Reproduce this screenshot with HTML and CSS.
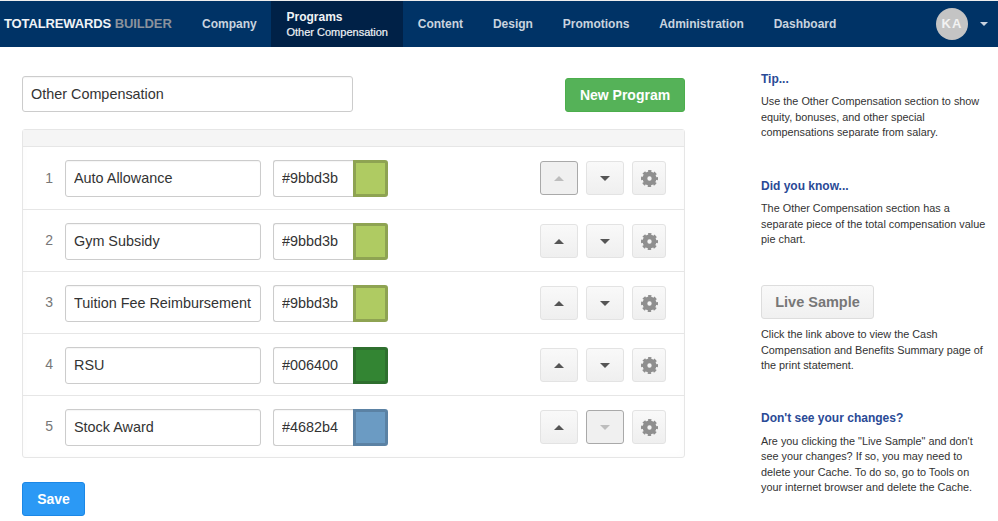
FILE: index.html
```html
<!DOCTYPE html>
<html lang="en">
<head>
<meta charset="utf-8">
<title>Other Compensation</title>
<link rel="stylesheet" href="styles.css">
</head>
<body>
<svg class="defs" aria-hidden="true">
  <symbol id="cog" viewBox="0 0 18 18">
    <circle class="cog-body" cx="9" cy="9" r="4.8"/>
    <circle class="cog-teeth" cx="9" cy="9" r="7.2"/>
  </symbol>
</svg>
<header class="nav">
  <div class="brand"><b>TOTALREWARDS</b> <span>BUILDER</span></div>
  <nav class="menu">
    <a class="item">Company</a>
    <a class="item active"><b>Programs</b><small>Other Compensation</small></a>
    <a class="item">Content</a>
    <a class="item">Design</a>
    <a class="item">Promotions</a>
    <a class="item">Administration</a>
    <a class="item">Dashboard</a>
  </nav>
  <div class="user"><span class="avatar">KA</span><i class="caret"></i></div>
</header>
<div class="page">
  <main class="content">
    <div class="top">
      <input class="field title" value="Other Compensation">
      <button class="btn-green">New Program</button>
    </div>
    <section class="panel">
      <div class="panel-head"></div>
      <div class="row first">
        <span class="num">1</span>
        <input class="field name" value="Auto Allowance">
        <div class="color"><input class="field hex" value="#9bbd3b"><span class="swatch lime"></span></div>
        <div class="actions">
          <button class="tool off"><i class="up"></i></button>
          <button class="tool"><i class="down"></i></button>
          <button class="tool gear"><svg><use href="#cog"/></svg></button>
        </div>
      </div>
      <div class="row">
        <span class="num">2</span>
        <input class="field name" value="Gym Subsidy">
        <div class="color"><input class="field hex" value="#9bbd3b"><span class="swatch lime"></span></div>
        <div class="actions">
          <button class="tool"><i class="up"></i></button>
          <button class="tool"><i class="down"></i></button>
          <button class="tool gear"><svg><use href="#cog"/></svg></button>
        </div>
      </div>
      <div class="row">
        <span class="num">3</span>
        <input class="field name" value="Tuition Fee Reimbursement">
        <div class="color"><input class="field hex" value="#9bbd3b"><span class="swatch lime"></span></div>
        <div class="actions">
          <button class="tool"><i class="up"></i></button>
          <button class="tool"><i class="down"></i></button>
          <button class="tool gear"><svg><use href="#cog"/></svg></button>
        </div>
      </div>
      <div class="row">
        <span class="num">4</span>
        <input class="field name" value="RSU">
        <div class="color"><input class="field hex" value="#006400"><span class="swatch green"></span></div>
        <div class="actions">
          <button class="tool"><i class="up"></i></button>
          <button class="tool"><i class="down"></i></button>
          <button class="tool gear"><svg><use href="#cog"/></svg></button>
        </div>
      </div>
      <div class="row">
        <span class="num">5</span>
        <input class="field name" value="Stock Award">
        <div class="color"><input class="field hex" value="#4682b4"><span class="swatch blue"></span></div>
        <div class="actions">
          <button class="tool"><i class="up"></i></button>
          <button class="tool off"><i class="down"></i></button>
          <button class="tool gear"><svg><use href="#cog"/></svg></button>
        </div>
      </div>
    </section>
    <button class="btn-blue">Save</button>
  </main>
  <aside class="side">
    <h4>Tip...</h4>
    <p>Use the Other Compensation section to show equity, bonuses, and other special compensations separate from salary.</p>
    <h4>Did you know...</h4>
    <p>The Other Compensation section has a separate piece of the total compensation value pie chart.</p>
    <button class="btn-live">Live Sample</button>
    <p class="after-live">Click the link above to view the Cash Compensation and Benefits Summary page of the print statement.</p>
    <h4>Don't see your changes?</h4>
    <p class="last">Are you clicking the "Live Sample" and don't see your changes? If so, you may need to delete your Cache. To do so, go to Tools on your internet browser and delete the Cache.</p>
  </aside>
</div>
</body>
</html>
```
FILE: styles.css
```css
* { box-sizing: border-box; }
html, body { margin: 0; padding: 0; }
body {
  font-family: "Liberation Sans", Arial, sans-serif;
  color: #333;
  background: #fff;
  height: 521px;
  overflow: hidden;
  border-top: 1px solid #eee;
}
.defs { display: none; }
.nav {
  display: flex;
  align-items: stretch;
  height: 46px;
  background: #003366;
  color: #c9d3df;
}
.brand {
  width: 202px;
  padding-left: 4px;
  line-height: 46px;
  font-size: 13px;
  font-weight: bold;
  white-space: nowrap;
}
.brand b { color: #f0f3f6; letter-spacing: -0.13px; }
.brand span { color: #8a929c; letter-spacing: -0.1px; }
.menu { display: flex; flex: 1; gap: 29.8px; }
.item {
  display: flex;
  flex-direction: column;
  justify-content: center;
  font-size: 12px;
  font-weight: bold;
  white-space: nowrap;
}
.item.active {
  padding: 0 15px 2px;
  margin: 0 -15px;
  background: #002147;
  color: #f0f3f6;
}
.item.active b { line-height: 18px; }
.item.active small { font-size: 11px; font-weight: normal; line-height: 13px; -webkit-text-stroke: 0.2px; }
.user { display: flex; align-items: center; padding-right: 10px; }
.avatar {
  width: 32px;
  height: 32px;
  border-radius: 50%;
  background: #c4c4c4;
  color: #f2f2f2;
  font-size: 13px;
  font-weight: bold;
  letter-spacing: 1px;
  text-align: center;
  line-height: 32px;
}
.caret {
  margin-left: 12px;
  border-top: 4px solid #c9d3df;
  border-left: 4px solid transparent;
  border-right: 4px solid transparent;
}
.page { display: flex; }
.content { width: 663px; margin: 29px 0 0 22px; }
.top { display: flex; justify-content: space-between; align-items: flex-start; }
.field {
  height: 37px;
  border: 1px solid #ccc;
  border-radius: 3px;
  padding: 0 8px;
  font: 14.4px "Liberation Sans", Arial, sans-serif;
  color: #333;
  background: #fff;
  box-shadow: inset 0 1px 1px rgba(0,0,0,.04);
}
.name, .hex { padding-bottom: 2px; }
.title { width: 331px; height: 36px; }
.btn-green {
  width: 120px;
  height: 34px;
  margin-top: 2px;
  border: 1px solid #4cae4c;
  border-radius: 3px;
  background: #55b258;
  color: #fff;
  font: bold 14px "Liberation Sans", Arial, sans-serif;
}
.panel {
  margin-top: 17px;
  border: 1px solid #e6e6e6;
  border-radius: 3px;
  box-shadow: inset 0 0 8px rgba(0,0,0,.02);
}
.panel-head { height: 16px; background: #f5f5f5; }
.row {
  display: flex;
  align-items: flex-start;
  height: 62px;
  padding: 13px 18px 0 0;
  border-top: 1px solid #e6e6e6;
}
.row.first { height: 63px; }
.num { width: 42px; padding-right: 12px; text-align: right; font-size: 14px; line-height: 35px; color: #777; }
.first .num { line-height: 37px; }
.name { width: 196px; }
.color { display: flex; margin-left: 12px; }
.hex { width: 80px; border-radius: 3px 0 0 3px; border-right: 0; }
.swatch { width: 35px; height: 37px; border: 3px solid; border-radius: 0 3px 3px 0; }
.lime { background: #afcb62; border-color: #8ea352; }
.green { background: #338533; border-color: #2e6f2e; }
.blue { background: #6b9bc3; border-color: #5b82a4; }
.actions { display: flex; gap: 8px; margin: 1px 0 0 auto; }
.tool {
  display: flex;
  align-items: center;
  justify-content: center;
  width: 38px;
  height: 34px;
  padding: 0;
  border: 1px solid #e3e3e3;
  border-radius: 3px;
  background: linear-gradient(#f9f9f9, #efefef);
}
.tool.off { border-color: #a9a9a9; background: #f0f0f0; }
.gear { width: 34px; }
.gear svg { width: 17px; height: 17px; }
.cog-body { fill: none; stroke: #8f8f8f; stroke-width: 5; }
.cog-teeth { fill: none; stroke: #8f8f8f; stroke-width: 3.6; stroke-dasharray: 3.2 2.455; stroke-dashoffset: 1.6; }
.up, .down { border-left: 5px solid transparent; border-right: 5px solid transparent; }
.up { border-bottom: 5px solid #555; }
.down { border-top: 5px solid #555; }
.off .up { border-bottom-color: #bdbdbd; }
.off .down { border-top-color: #bdbdbd; }
.btn-blue {
  display: block;
  width: 63px;
  height: 34px;
  margin-top: 24px;
  border: 1px solid #1b87e6;
  border-radius: 3px;
  background: #2b99f5;
  color: #fff;
  font: bold 14px "Liberation Sans", Arial, sans-serif;
}
.side { width: 228px; margin: 24px 0 0 76px; font-size: 10.85px; line-height: 15.5px; color: #333; }
.side h4 { margin: 0; font-size: 12px; line-height: 16px; color: #2a4a96; }
.side p { margin: 7px 0 37.5px; }
.side .after-live { margin: 8px 0 36.5px; }
.side .last { margin-top: 7.5px; }
.btn-live {
  display: block;
  width: 113px;
  height: 34px;
  padding: 0;
  border: 1px solid #ddd;
  border-radius: 3px;
  background: linear-gradient(#f9f9f9, #f0f0f0);
  color: #777;
  font: bold 14.5px "Liberation Sans", Arial, sans-serif;
}
```
